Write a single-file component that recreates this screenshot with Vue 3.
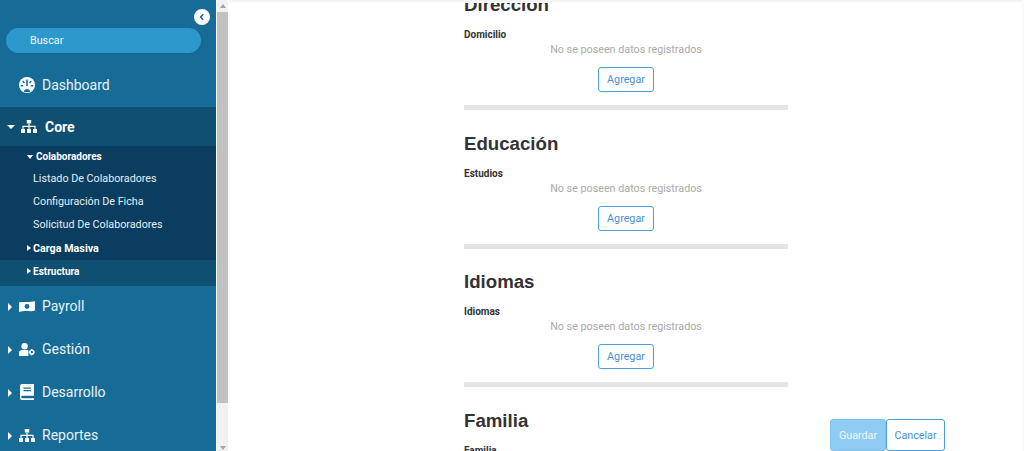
<script setup>
const sections = [
  { title: 'Dirección', label: 'Domicilio' },
  { title: 'Educación', label: 'Estudios' },
  { title: 'Idiomas', label: 'Idiomas' },
]
const subItems = ['Listado De Colaboradores', 'Configuración De Ficha', 'Solicitud De Colaboradores']
</script>

<template>
  <div class="page">
    <aside class="sidebar">
      <div class="toggle">
        <svg width="8" height="8" viewBox="0 0 8 8"><path d="M5.2 1.2 2.6 4l2.6 2.8" fill="none" stroke="#176d98" stroke-width="1.6" /></svg>
      </div>
      <div class="search">Buscar</div>

      <div class="item dashboard">
        <svg class="icon" width="16" height="16" viewBox="0 0 16 16">
          <circle cx="8" cy="8" r="8" fill="#fff" />
          <path d="M7.2 2.5h1.6V9H7.2zM3.2 4.6l1.2-1 1.6 1.8-1.2 1zM11.6 3.6l1.2 1-1.6 1.8-1.2-1zM1.8 8h2.4v1.6H1.8zM11.8 8h2.4v1.6h-2.4z" fill="#176d98" />
          <path d="M5 15a3 3 0 0 1 6 0z" fill="#176d98" />
        </svg>
        <span>Dashboard</span>
      </div>

      <div class="item core">
        <i class="caret down"></i>
        <svg class="icon" width="16" height="13" viewBox="0 0 16 13">
          <path d="M5.8 0h4.4v3.6H5.8zM0 9h4v4H0zM6 9h4v4H6zM12 9h4v4h-4z" fill="#fff" />
          <path d="M7.4 3.6h1.2v2.2H14.6V9h-1.2V7H8.6v2H7.4V7H2.6v2H1.4V5.8h6z" fill="#fff" />
        </svg>
        <span>Core</span>
      </div>

      <div class="sub">
        <div class="sub-head colab"><i class="caret small-down"></i>Colaboradores</div>
        <div v-for="s in subItems" :key="s" class="sub-link">{{ s }}</div>
        <div class="sub-head masiva"><i class="caret small-right"></i>Carga Masiva</div>
      </div>
      <div class="sub-head estructura"><i class="caret small-right"></i>Estructura</div>

      <div class="item">
        <i class="caret right"></i>
        <svg class="icon" width="16" height="11" viewBox="0 0 16 11">
          <path d="M0 1.4C4 .2 10 2 16 0v9.6C12 11 6 9 0 11z" fill="#fff" />
          <circle cx="8" cy="5.5" r="2.4" fill="#176d98" />
        </svg>
        <span>Payroll</span>
      </div>
      <div class="item">
        <i class="caret right"></i>
        <svg class="icon" width="16" height="13" viewBox="0 0 16 13">
          <circle cx="5.6" cy="3.2" r="3.2" fill="#fff" />
          <path d="M0 13V9.8C0 8 1.4 7 3 7h5c.6 0 1 .2 1.4.4V13z" fill="#fff" />
          <circle cx="12.8" cy="9.2" r="1.9" fill="none" stroke="#fff" stroke-width="1.5" />
          <path d="M12.8 6v1M12.8 11.4v1M9.8 9.2h1M14.8 9.2h1" stroke="#fff" stroke-width="1.2" />
        </svg>
        <span>Gestión</span>
      </div>
      <div class="item">
        <i class="caret right"></i>
        <svg class="icon book" width="14" height="16" viewBox="0 0 14 16">
          <path d="M2 0h12v11.8H2.4a1.2 1.2 0 0 0 0 2.4H14V16H2a2 2 0 0 1-2-2V2a2 2 0 0 1 2-2z" fill="#fff" />
          <path d="M3.5 3.5h7.5v1.2H3.5zM3.5 6h7.5v1.2H3.5z" fill="#176d98" />
        </svg>
        <span>Desarrollo</span>
      </div>
      <div class="item">
        <i class="caret right"></i>
        <svg class="icon" width="16" height="13" viewBox="0 0 16 13">
          <path d="M5.8 0h4.4v3.6H5.8zM0 9h4v4H0zM6 9h4v4H6zM12 9h4v4h-4z" fill="#fff" />
          <path d="M7.4 3.6h1.2v2.2H14.6V9h-1.2V7H8.6v2H7.4V7H2.6v2H1.4V5.8h6z" fill="#fff" />
        </svg>
        <span>Reportes</span>
      </div>
    </aside>

    <div class="scrollbar">
      <i class="arrow up"></i>
      <div class="thumb"></div>
      <i class="arrow dn"></i>
    </div>

    <main class="main">
      <div class="column">
        <section v-for="s in sections" :key="s.title" class="section">
          <h2>{{ s.title }}</h2>
          <div class="label">{{ s.label }}</div>
          <div class="empty">No se poseen datos registrados</div>
          <button class="btn add">Agregar</button>
          <div class="rule"></div>
        </section>
        <section class="section">
          <h2>Familia</h2>
          <div class="label">Familia</div>
        </section>
      </div>
      <div class="actions">
        <button class="btn save">Guardar</button>
        <button class="btn cancel">Cancelar</button>
      </div>
    </main>
  </div>
</template>

<style>
html, body { margin: 0; height: 451px; overflow: hidden; background: #fff; }
</style>

<style scoped>
.page {
  display: flex;
  width: 1024px;
  height: 451px;
  overflow: hidden;
  font-family: Roboto, sans-serif;
}

.sidebar {
  position: relative;
  flex: 0 0 216px;
  height: 451px;
  overflow: hidden;
  background: #176c97;
  color: #fff;
  display: flex;
  flex-direction: column;
}
.toggle {
  position: absolute;
  left: 194px;
  top: 9px;
  width: 16px;
  height: 16px;
  border-radius: 50%;
  background: #fff;
  display: flex;
  align-items: center;
  justify-content: center;
}
.search {
  flex: none;
  margin: 28px 15px 0 6px;
  height: 25px;
  line-height: 25px;
  padding-left: 24px;
  border-radius: 13px;
  background: #2d98cc;
  font-size: 10.75px;
  color: #eef7fc;
}

.item {
  flex: 0 0 43px;
  box-sizing: border-box;
  padding: 0 0 3px 8px;
  display: flex;
  align-items: center;
  font-size: 14px;
  color: #e9f2f7;
  position: relative;
}
.item .icon { position: absolute; left: 19px; }
.item .book { left: 20px; }
.item span { margin-left: 34px; }
.dashboard { margin-top: 11px; padding-bottom: 1px; }
.core {
  flex: 0 0 39px;
  padding-bottom: 0;
  background: #0f4f72;
  font-weight: 700;
  color: #fff;
}
.core .icon { left: 21px; }
.core span { margin-left: 37px; }

.caret {
  position: absolute;
  width: 0;
  height: 0;
  border-style: solid;
  border-color: transparent;
}
.caret.right { left: 8px; top: 17px; border-width: 4px 0 4px 4px; border-left-color: #fff; }
.caret.down { left: 7px; border-width: 4px 4px 0 4px; border-top-color: #fff; }
.caret.small-right { left: 27px; border-width: 3.5px 0 3.5px 4px; border-left-color: #fff; }
.caret.small-down { left: 27px; border-width: 4px 3.5px 0 3.5px; border-top-color: #fff; }

.sub { background: #0a3d5f; flex: 0 0 114px; }
.sub-head {
  position: relative;
  display: flex;
  align-items: center;
  font-size: 10px;
  font-weight: 700;
  color: #fff;
}
.colab { height: 21px; padding-left: 36px; }
.masiva { height: 24px; padding-left: 33px; font-size: 10.75px; }
.estructura {
  flex: 0 0 26px;
  box-sizing: border-box;
  padding: 0 0 4px 33px;
  background: #0f4f72;
}
.estructura .caret { top: 8px; }
.sub-link {
  height: 23px;
  line-height: 23px;
  padding-left: 33px;
  font-size: 10.75px;
  color: #e4eef4;
}

.scrollbar {
  flex: 0 0 11px;
  margin: 0 1px;
  height: 451px;
  background: #f1f1f1;
  display: flex;
  flex-direction: column;
  align-items: center;
}
.thumb { width: 100%; height: 391px; background: #c1c1c1; margin: 4px 0 43px; flex: none; }
.arrow { width: 0; height: 0; border-style: solid; border-color: transparent; flex: none; }
.arrow.up { margin-top: 4px; border-width: 0 3.5px 4px 3.5px; border-bottom-color: #a3a3a3; }
.arrow.dn { border-width: 4px 3.5px 0 3.5px; border-top-color: #a3a3a3; }

.main {
  position: relative;
  flex: 1;
  height: 451px;
  overflow: hidden;
  background: #fff;
}
.main::before {
  content: '';
  position: absolute;
  left: 0;
  right: 0;
  top: 0;
  height: 3px;
  background: linear-gradient(#f0f0f0, #fff);
}
.main::after {
  content: '';
  position: absolute;
  right: 0;
  top: 0;
  bottom: 0;
  width: 2px;
  background: #fafafa;
}
.column { width: 324px; margin: -8px 0 0 235px; }
.section { height: 138.67px; }
h2 {
  margin: 0;
  padding-top: 1px;
  height: 24px;
  line-height: 24px;
  font-family: "Liberation Sans", Arial, sans-serif;
  font-size: 18.67px;
  font-weight: 700;
  color: #333;
}
.label {
  margin-top: 12px;
  height: 12px;
  line-height: 12px;
  font-size: 10px;
  font-weight: 700;
  color: #333;
}
.empty {
  margin-top: 1px;
  height: 15px;
  line-height: 15px;
  text-align: center;
  font-size: 10.75px;
  color: #aaa;
}
.btn {
  font-family: Roboto, sans-serif;
  font-size: 10.75px;
  border: 1px solid #4a9fdc;
  border-radius: 3px;
  background: #fff;
  color: #4a90d9;
  padding: 0;
}
.add { display: block; width: 56px; height: 25px; margin: 10px auto 0; }
.rule { height: 5px; margin-top: 13px; background: #e5e5e5; }

.actions {
  position: absolute;
  left: 601px;
  top: 419px;
  display: flex;
}
.save { width: 56px; height: 32px; background: #8fcbf2; border-color: #7fc0ec; color: #eef7fd; }
.cancel { width: 59px; height: 32px; }
</style>
